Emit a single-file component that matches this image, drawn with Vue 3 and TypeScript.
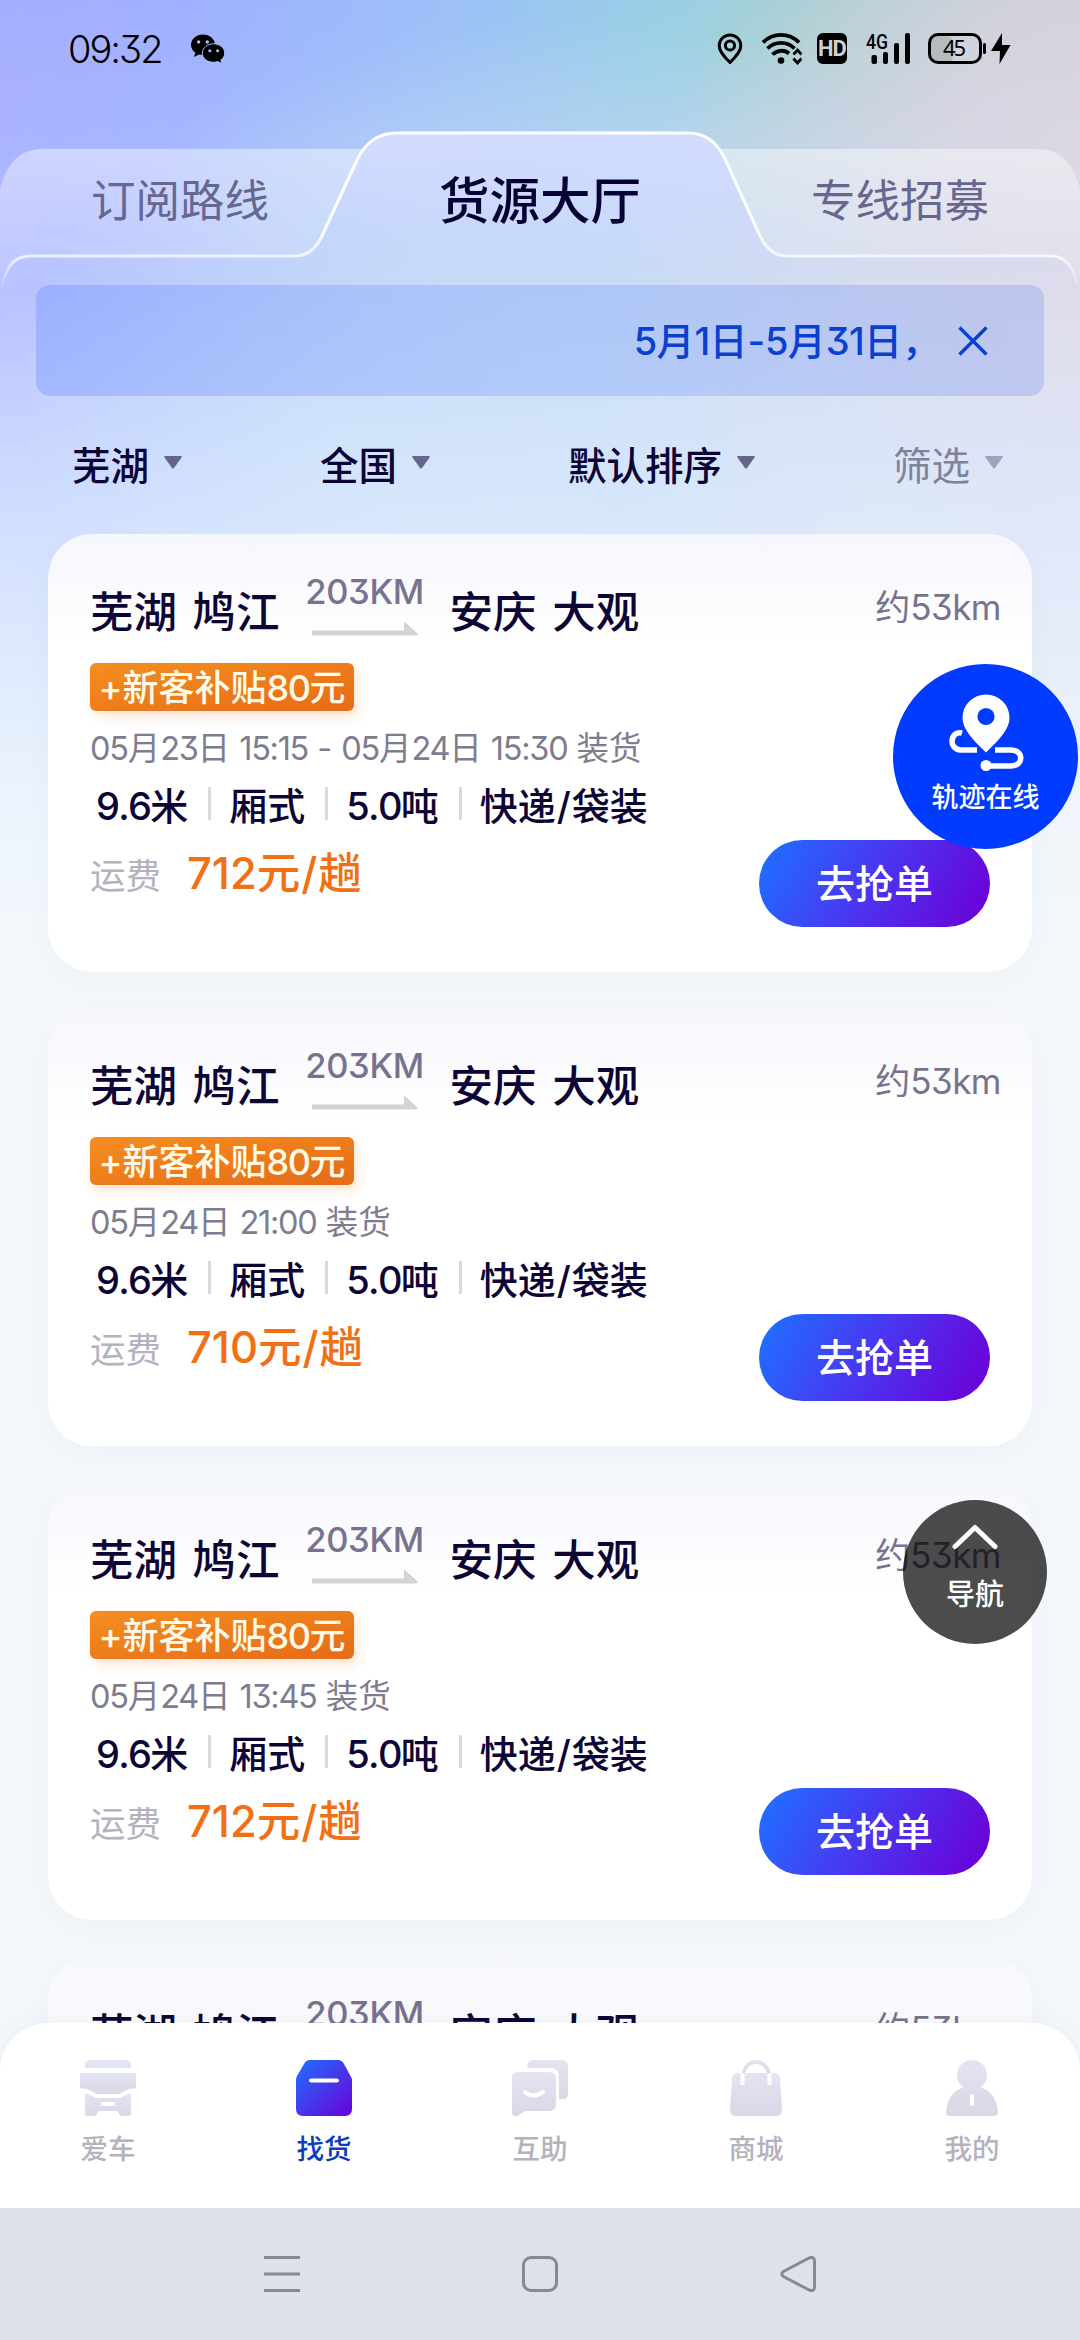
<script setup lang="ts">
import { h } from 'vue'

interface Cargo {
  from: string
  to: string
  distance: string
  away: string
  bonus: string
  time: string
  specs: string[]
  price: string
}

const route = { from: '芜湖 鸠江', to: '安庆 大观', distance: '203KM', away: '约53km', bonus: '+新客补贴80元' }
const specs = ['9.6米', '厢式', '5.0吨', '快递/袋装']

const cargos: Cargo[] = [
  { ...route, specs, time: '05月23日 15:15 - 05月24日 15:30 装货', price: '712元/趟' },
  { ...route, specs, time: '05月24日 21:00 装货', price: '710元/趟' },
  { ...route, specs, time: '05月24日 13:45 装货', price: '712元/趟' },
  { ...route, specs, time: '05月24日 13:45 装货', price: '712元/趟' },
]

const filters = [
  { label: '芜湖', muted: false },
  { label: '全国', muted: false },
  { label: '默认排序', muted: false },
  { label: '筛选', muted: true },
]

const navs = [
  { key: 'car', label: '爱车' },
  { key: 'cargo', label: '找货' },
  { key: 'help', label: '互助' },
  { key: 'shop', label: '商城' },
  { key: 'me', label: '我的' },
]

// Latin runs carry their own letter spacing, apart from the Chinese ones.
const Mixed = (props: { text: string }) =>
  h(
    'span',
    { class: 'mixed' },
    props.text
      .split(/([0-9A-Za-z.:+]+|\/)/)
      .filter(Boolean)
      .map((part) => {
        if (part === '/') return h('span', { class: 'slash' }, part)
        return /[0-9A-Za-z]/.test(part) ? h('span', { class: 'latin' }, part) : part
      }),
  )
Mixed.props = ['text']
</script>

<template>
  <div class="screen">
    <div class="backdrop"></div>

    <header class="status">
      <span class="clock">09:32</span>
      <svg class="wechat" width="34" height="30" viewBox="0 0 34 30">
        <path d="M12 .5C5.400.5 0 5 0 10.800c0 3.300 1.700 6.100 4.400 8L3 23l5-2.400c1.200.3 2.600.5 4 .5C18.600 21.100 24 16.500 24 10.800S18.600.5 12 .5Z" />
        <circle cx="7.600" cy="8" r="1.700" fill="#a9c0f8" /><circle cx="16.300" cy="8" r="1.700" fill="#a9c0f8" />
        <path d="M22.500 9.800c6.200 0 11.200 4 11.200 9.300 0 3-1.400 5.300-3.800 7l1 3.500-4.200-2c-1.200.4-2.700.7-4.200.7-6.200 0-11.200-4-11.200-9.200s5-9.300 11.200-9.300Z" stroke="#a5bff8" stroke-width="1" />
        <circle cx="18.800" cy="16.800" r="1.500" fill="#a9c0f8" /><circle cx="26.600" cy="16.800" r="1.500" fill="#a9c0f8" />
      </svg>
      <div class="indicators">
        <svg width="26" height="32" viewBox="0 0 26 32" fill="none" stroke="#000" stroke-width="3">
          <path d="M13 29.500C6 22.500 2.200 18 2.200 12.700a10.800 10.800 0 0 1 21.600 0C23.800 18 20 22.500 13 29.500Z" stroke-linejoin="round" />
          <circle cx="13" cy="12.500" r="4.600" />
        </svg>
        <svg width="40" height="32" viewBox="0 0 40 32">
          <g fill="none" stroke="#000" stroke-width="3.800">
            <path d="M1 9.500C11-.6 27-.6 37 9.500" />
            <path d="M5.500 15.500C13 8 25 8 32.500 15.500" />
            <path d="M10.500 21.500C15.300 16.700 22.700 16.700 27 20.500" />
          </g>
          <circle cx="19" cy="27.500" r="3.300" />
          <path d="m31.500 21.500 4-4.500 4 4.500M31.500 25.500l4 4.500 4-4.500" fill="none" stroke="#000" stroke-width="2.800" />
        </svg>
        <span class="hd">HD</span>
        <svg class="signal" width="45" height="32" viewBox="0 0 45 32">
          <text x="0" y="16" class="g4" textLength="22" lengthAdjust="spacingAndGlyphs">4G</text>
          <rect x="5.500" y="22" width="5.500" height="9" rx="2" />
          <rect x="17" y="19" width="5" height="12" rx="2" />
          <rect x="28" y="10" width="5" height="21" rx="2" />
          <rect x="39" y="0" width="5" height="31" rx="2" />
        </svg>
        <svg class="battery" width="83" height="32" viewBox="0 0 83 32">
          <rect x="3" y="3" width="22" height="26" rx="6" fill="#b4bcc0" />
          <rect x="1.500" y="1.500" width="51" height="28" rx="8.500" fill="none" stroke="#000" stroke-width="3" />
          <path d="M56.500 11.500v8" stroke="#000" stroke-width="3" stroke-linecap="round" />
          <text x="15" y="23" class="level" textLength="23">45</text>
          <path d="M74 0 63 18h9l-.5 13L82.500 12H74Z" />
        </svg>
      </div>
    </header>

    <nav class="tabs">
      <svg class="tab-shape" width="1080" height="180" viewBox="0 0 1080 180">
        <defs>
          <linearGradient id="side" x1="0" y1="0" x2="0" y2="1">
            <stop offset="0" stop-color="#fff" stop-opacity=".44" />
            <stop offset="1" stop-color="#fff" stop-opacity=".1" />
          </linearGradient>
          <linearGradient id="active" gradientUnits="userSpaceOnUse" x1="0" y1="2" x2="0" y2="160">
            <stop offset="0" stop-color="#d2dcff" />
            <stop offset=".35" stop-color="#d2dcff" stop-opacity=".8" />
            <stop offset=".8" stop-color="#d2dcff" stop-opacity=".2" />
            <stop offset="1" stop-color="#d2dcff" stop-opacity="0" />
          </linearGradient>
          <linearGradient id="edge" gradientUnits="userSpaceOnUse" x1="0" y1="0" x2="0" y2="160">
            <stop offset="0" stop-color="#fff" />
            <stop offset=".5" stop-color="#fff" />
            <stop offset=".8" stop-color="#fff" stop-opacity=".7" />
            <stop offset="1" stop-color="#fff" stop-opacity="0" />
          </linearGradient>
        </defs>
        <path d="M0 58Q10 18 42 18H363Q360 22 357 29L321 107Q312 125 295 125H30Q8 125 0 150Z" fill="url(#side)" />
        <path d="M1080 58Q1070 18 1038 18H720Q722 20 724 26L761 107Q770 125 787 125H1053Q1072 125 1080 150Z" fill="url(#side)" />
        <path d="M0 160Q6 125 30 125H295Q312 125 321 107L357 29Q370 2 396 2H688Q712 2 724 26L761 107Q770 125 787 125H1053Q1074 127 1080 160Z" fill="url(#active)" />
        <path d="M2 155Q8 125 30 125H295Q312 125 321 107L357 29Q370 2 396 2H688Q712 2 724 26L761 107Q770 125 787 125H1053Q1072 127 1078 155" fill="none" stroke="url(#edge)" stroke-width="3" />
      </svg>
      <span class="tab side-tab">订阅路线</span>
      <span class="tab current">货源大厅</span>
      <span class="tab side-tab">专线招募</span>
    </nav>

    <div class="notice">
      <Mixed text="5月1日-5月31日，" />
      <svg width="30" height="30" viewBox="0 0 30 30"><path d="M1.500 1.500 28.500 28.500M28.500 1.500 1.500 28.500" stroke="#0b40cf" stroke-width="3.400" /></svg>
    </div>

    <div class="filters">
      <div v-for="f in filters" :key="f.label" class="filter" :class="{ muted: f.muted }">
        <span>{{ f.label }}</span>
        <svg width="18" height="13" viewBox="0 0 18 13"><path d="M1 0H17Q18.500 0 17.500 1.500L10 12Q9 13.200 8 12L.5 1.500Q-.5 0 1 0Z" fill="#64648c" /></svg>
      </div>
    </div>

    <main class="list">
      <article v-for="(c, i) in cargos" :key="i" class="card">
        <div class="route">
          <span class="place">{{ c.from }}</span>
          <div class="distance">
            <Mixed :text="c.distance" />
            <svg width="106" height="14" viewBox="0 0 106 14"><path d="M0 8.500H92V0Q93 0 94 1L105 11Q107 13.500 104 13.500H0Z" fill="#d3d2d6" /></svg>
          </div>
          <span class="place">{{ c.to }}</span>
          <span class="away"><Mixed :text="c.away" /></span>
        </div>
        <span class="bonus"><Mixed :text="c.bonus" /></span>
        <div class="time"><Mixed :text="c.time" /></div>
        <div class="specs">
          <span v-for="s in c.specs" :key="s" class="spec"><Mixed :text="s" /></span>
        </div>
        <div class="foot">
          <div class="freight">
            <span class="fee">运费</span>
            <span class="price"><Mixed :text="c.price" /></span>
          </div>
          <button class="grab">去抢单</button>
        </div>
      </article>
    </main>

    <nav class="bottom">
      <div v-for="n in navs" :key="n.key" class="nav-item" :class="{ on: n.key === 'cargo' }">
        <svg width="58" height="58" viewBox="0 0 58 58">
          <defs>
            <linearGradient :id="'soft-' + n.key" x1="0" y1="0" x2="0" y2="1">
              <stop offset="0" stop-color="#e3e4f2" />
              <stop offset="1" stop-color="#dad6e6" />
            </linearGradient>
            <linearGradient v-if="n.key === 'cargo'" id="vivid" x1="0" y1="0" x2="1" y2="1">
              <stop offset="0" stop-color="#1e72ff" />
              <stop offset="1" stop-color="#6a00d8" />
            </linearGradient>
          </defs>
          <g v-if="n.key === 'car'" :fill="'url(#soft-car)'">
            <path d="M6 9V6Q7 1 12 1H46Q51 1 52 6V9Z" fill="#e0e4f3" />
            <path d="M1 14H57V29L50 30 40 35H18L8 30 1 29Z" />
            <path d="M6 34 17 39H41L52 34V54Q52 57 49 57H42L38 52H20L16 57H9Q6 57 6 54Z" />
            <path d="M22 43H36V47H22Z" fill="#fff" />
          </g>
          <g v-else-if="n.key === 'cargo'">
            <path d="M15 1H43Q47 1 49 5L56 18Q57 19 57 21V50Q57 57 50 57H8Q1 57 1 50V21Q1 19 2 17L9 5Q11 1 15 1Z" fill="url(#vivid)" />
            <path d="M16 21.500H42" stroke="#fff" stroke-width="4" stroke-linecap="round" />
          </g>
          <g v-else-if="n.key === 'help'" :fill="'url(#soft-help)'">
            <path d="M16 9 17 4Q18 1 21 1H50Q57 1 57 8V37L54 40H48V18Q48 9 39 9Z" />
            <path d="M7 13H38Q45 13 45 20V45Q45 52 38 52H14L6 57Q1 58 1 53V19Q1 13 7 13Z" />
            <path d="M14 33Q22 40 32 33" fill="none" stroke="#fff" stroke-width="4" stroke-linecap="round" />
          </g>
          <g v-else-if="n.key === 'shop'" :fill="'url(#soft-shop)'">
            <path d="M15 14C17 4 23 1 29 1S41 4 44 14H40C38 8 34 5 29 5S20 8 18 14Z" />
            <path d="M11 14H47Q52 14 53 19L55 50Q55 57 49 57H9Q3 57 3 50L5 19Q6 14 11 14Z" />
            <path d="M15.500 14V26M42.500 14V26" stroke="#fff" stroke-width="4" />
          </g>
          <g v-else :fill="'url(#soft-me)'">
            <path d="M29 1a15 15 0 0 1 8.500 27.500C48 31 54 40 55 53Q55 57 51 57H7Q3 57 3 53C4 40 10 31 20.500 28.500A15 15 0 0 1 29 1Z" />
            <path d="M29 37V45" stroke="#fff" stroke-width="4" stroke-linecap="round" />
          </g>
        </svg>
        <span>{{ n.label }}</span>
      </div>
    </nav>

    <footer class="system">
      <svg width="36" height="36" viewBox="0 0 36 36"><path d="M0 1.500H36M0 18H36M0 34.500H36" /></svg>
      <svg width="36" height="36" viewBox="0 0 36 36"><rect x="1.500" y="1.500" width="33" height="33" rx="7.500" /></svg>
      <svg width="36" height="36" viewBox="0 0 36 36"><path d="M29 2 3.500 15.500Q0 18 3.500 20.500L29 34Q34.500 36 34.500 31V5Q34.500 0 29 2Z" /></svg>
    </footer>

    <div class="track">
      <svg width="78" height="78" viewBox="0 0 78 78">
        <path d="M15 39C4 36 0 55 14 56H30M48 56H64C77 56 77 72 64 72H39" fill="none" stroke="#fff" stroke-width="5.500" />
        <circle cx="39" cy="71.500" r="5.500" fill="#fff" />
        <path d="M39 62C24 46 13 36 13 24.500a26 24.500 0 0 1 52 0C65 36 54 46 39 62Z" fill="#003bff" />
        <path d="M39 58.500C25 45 15.500 35 15.500 23.500a23.500 23 0 0 1 47 0C62.500 35 53 45 39 58.500Z" fill="#fff" />
        <circle cx="39" cy="22.500" r="8.600" fill="#003bff" />
      </svg>
      <span>轨迹在线</span>
    </div>

    <div class="guide">
      <svg width="46" height="26" viewBox="0 0 46 26"><path d="M3 22.500 23 3.500 43 22.500" fill="none" stroke="#fff" stroke-width="5" stroke-linecap="round" stroke-linejoin="round" /></svg>
      <span>导航</span>
    </div>
  </div>
</template>

<style>
body {
  background: #f4f8fc;
}
.mixed .latin {
  letter-spacing: var(--latin, -0.04em);
}
.mixed .slash {
  padding: 0 1px;
}
</style>

<style scoped>
.screen {
  position: relative;
  display: flex;
  flex-direction: column;
  width: 1080px;
  height: 2340px;
  overflow: hidden;
  background: #f4f8fc;
  color: #0d0535;
  font-family: Inter, 'Noto Sans CJK SC', sans-serif;
  font-feature-settings: 'cv09';
  white-space: nowrap;
}
.screen svg {
  display: block;
  flex: none;
}
.backdrop {
  position: absolute;
  inset: 0 0 auto;
  height: 1000px;
  background:
    linear-gradient(180deg, rgba(226, 237, 255, 0) 0, rgba(222, 233, 255, 0.1) 150px, rgba(222, 233, 255, 0.3) 270px, rgba(222, 236, 255, 0.66) 450px, rgba(228, 240, 254, 0.84) 600px, rgba(240, 247, 252, 0.95) 800px, #f4f8fc 950px),
    radial-gradient(ellipse 480px 480px at 1080px 360px, rgba(226, 214, 226, 0.85) 0, rgba(224, 216, 230, 0.6) 50%, rgba(224, 216, 230, 0) 100%),
    radial-gradient(ellipse 560px 380px at 580px 400px, rgba(192, 214, 244, 0.95) 0, rgba(192, 212, 244, 0.85) 45%, rgba(180, 204, 246, 0) 100%),
    linear-gradient(100deg, #a6adff 0, #a0b1ff 16%, #9cc0f7 36%, #98d0e4 53%, #a9cfd4 63%, #c8ced6 78%, #dccfd6 100%);
}
.status {
  position: relative;
  display: flex;
  align-items: center;
  height: 97px;
  padding: 0 69px 0 68px;
  color: #000;
}
.clock {
  width: 123px;
  font-size: 38px;
  font-weight: 300;
  letter-spacing: -2px;
}
.wechat {
  margin-top: 1px;
}
.indicators {
  display: flex;
  align-items: center;
  margin-left: auto;
}
.indicators svg {
  margin-right: 19px;
}
.hd {
  width: 30px;
  height: 31px;
  margin: 0 19px 0 -4px;
  border-radius: 6px;
  background: #000;
  color: #cdd2d6;
  font: 700 22px/31px Roboto, sans-serif;
  letter-spacing: -1px;
  text-align: center;
}
.g4 {
  font: 500 20px Roboto, sans-serif;
}
.level {
  font: 400 22px 'Noto Sans', sans-serif;
}
.indicators .signal {
  margin-right: 17px;
}
.indicators .battery {
  margin-right: 0;
}
.tabs {
  position: relative;
  display: flex;
  align-items: center;
  height: 152px;
  margin-top: 34px;
  box-sizing: border-box;
  padding-bottom: 20px;
}
.tab-shape {
  position: absolute;
  top: 0;
  left: 0;
}
.tab {
  position: relative;
  flex: 1;
  text-align: center;
}
.side-tab {
  font-size: 44.500px;
  color: #666690;
}
.current {
  font-size: 50.500px;
  font-weight: 500;
  color: #060236;
}
.notice {
  --latin: -0.02em;
  position: relative;
  display: flex;
  align-items: center;
  justify-content: flex-end;
  gap: 18px;
  height: 111px;
  margin: 2px 36px 0;
  padding-right: 56px;
  border-radius: 14px;
  background: linear-gradient(90deg, rgba(120, 150, 255, 0.42), rgba(130, 165, 248, 0.38) 50%, rgba(125, 150, 235, 0.32));
  color: #0b40cf;
  font-size: 38px;
  font-weight: 500;
}
.notice .mixed {
  margin-top: -5px;
}
.filters {
  position: relative;
  display: flex;
  justify-content: space-between;
  align-items: center;
  box-sizing: border-box;
  height: 138px;
  padding: 0 77px 4px 72px;
}
.filter {
  display: flex;
  align-items: center;
  gap: 15px;
  font-size: 38.500px;
  font-weight: 500;
}
.filter svg {
  margin-top: -1px;
}
.filter.muted {
  font-weight: 400;
  color: #7f829b;
}
.filter.muted svg {
  opacity: 0.5;
}
.list {
  position: relative;
  flex: 1;
  min-height: 0;
  display: flex;
  flex-direction: column;
  gap: 36px;
  overflow: hidden;
  padding: 0 48px;
}
.card {
  flex: none;
  box-sizing: border-box;
  height: 438px;
  padding: 37px 31px 0 42px;
  border-radius: 44px;
  background: linear-gradient(180deg, #f6f6fd 0, #fff 110px);
  box-shadow: 0 8px 26px rgba(70, 90, 110, 0.04);
}
.route {
  display: flex;
  align-items: center;
  height: 76px;
}
.place {
  font-size: 43.500px;
  font-weight: 500;
  word-spacing: 4px;
}
.distance {
  --latin: -0.01em;
  display: flex;
  flex-direction: column;
  align-items: center;
  width: 116px;
  margin: -9px 27px 0;
  color: #77738e;
  font-size: 34.500px;
  font-weight: 500;
  line-height: 38px;
}
.distance svg {
  margin-top: 11px;
}
.away {
  --latin: -0.015em;
  margin-left: auto;
  margin-top: -10px;
  color: #77738c;
  font-size: 35px;
}
.bonus {
  display: block;
  box-sizing: border-box;
  width: 264px;
  height: 48px;
  margin: 16px 0 0;
  border-radius: 6px;
  background: linear-gradient(170deg, #f58e20, #e66b16);
  box-shadow: 4px 6px 12px rgba(240, 130, 50, 0.2);
  color: #fffbe8;
  font-size: 36px;
  font-weight: 500;
  line-height: 50px;
  text-align: center;
}
.time {
  height: 40px;
  margin-top: 18px;
  color: #807c90;
  font-size: 32.500px;
  line-height: 40px;
}
.specs {
  --latin: -0.045em;
  display: flex;
  align-items: center;
  height: 44px;
  margin: 12px 0 0 6px;
  font-size: 38px;
  font-weight: 500;
  font-kerning: none;
}
.spec {
  display: flex;
  align-items: center;
}
.spec + .spec::before {
  content: '';
  width: 3px;
  height: 33px;
  margin: 0 18px 0 20px;
  background: #dad9df;
}
.foot {
  display: flex;
  justify-content: space-between;
  height: 87px;
  margin: 15px 11px 0 0;
}
.freight {
  display: flex;
  align-items: center;
  height: 50px;
  margin-top: 7px;
}
.fee {
  width: 97px;
  margin-top: 3px;
  color: #b4b2be;
  font-size: 35.500px;
}
.price {
  --latin: 0;
  margin-top: -4px;
  color: #f26f14;
  font-size: 43.500px;
  font-weight: 500;
}
.grab {
  width: 231px;
  height: 87px;
  padding: 0 0 6px;
  border: 0;
  border-radius: 44px;
  background: linear-gradient(120deg, #226cff 5%, #4b34f0 50%, #6a02d8 95%);
  color: #fff;
  font: 500 39px 'Noto Sans CJK SC', sans-serif;
}
.bottom {
  position: relative;
  display: flex;
  box-sizing: border-box;
  height: 185px;
  margin-top: -185px;
  padding-top: 36px;
  border-radius: 48px 48px 0 0;
  background: #fff;
  box-shadow: 0 -4px 24px rgba(60, 70, 100, 0.05);
}
.nav-item {
  flex: 1;
  display: flex;
  flex-direction: column;
  align-items: center;
  gap: 12px;
  color: #b3b2bd;
  font-size: 27.500px;
  font-weight: 500;
  line-height: 40px;
}
.nav-item.on {
  color: #0e3cbe;
}
.system {
  position: relative;
  display: flex;
  align-items: center;
  justify-content: center;
  gap: 222px;
  height: 132px;
  background: #dfe1ea;
}
.system svg {
  fill: none;
  stroke: #868993;
  stroke-width: 3;
}
.track {
  position: absolute;
  top: 664px;
  left: 893px;
  display: flex;
  flex-direction: column;
  align-items: center;
  box-sizing: border-box;
  width: 185px;
  height: 185px;
  padding-top: 30px;
  border-radius: 50%;
  background: #003bff;
  color: #fff;
  font-size: 27px;
  font-weight: 500;
  line-height: 36px;
}
.track span {
  margin-top: 8px;
}
.guide {
  position: absolute;
  top: 1500px;
  left: 903px;
  display: flex;
  flex-direction: column;
  align-items: center;
  box-sizing: border-box;
  width: 144px;
  height: 144px;
  padding-top: 24px;
  border-radius: 50%;
  background: rgba(0, 0, 0, 0.7);
  color: #fff;
  font-size: 29px;
  font-weight: 500;
  line-height: 40px;
}
.guide span {
  margin-top: 25px;
}
</style>
